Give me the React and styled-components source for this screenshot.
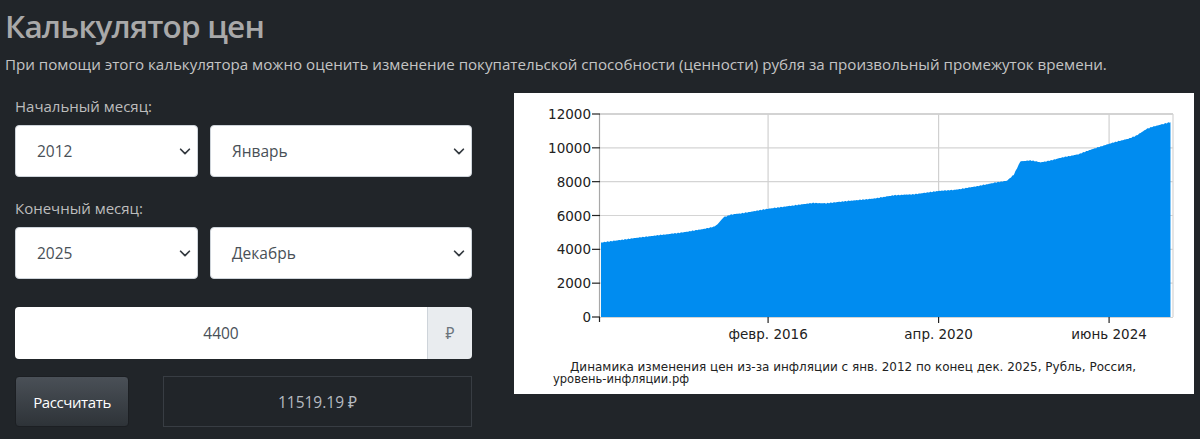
import React from 'react';
import styled, { createGlobalStyle } from 'styled-components';

const GlobalStyle = createGlobalStyle`
  html, body {
    margin: 0;
    padding: 0;
    background: #212529;
  }
  body {
    font-family: 'Open Sans', 'Noto Sans', sans-serif;
  }
`;

const Page = styled.div`
  width: 1200px;
  height: 439px;
  overflow: hidden;
  background: #212529;
`;

const Header = styled.div`
  padding: 6px 5px 0;
`;

const Title = styled.h1`
  margin: 0;
  font-size: 31.5px;
  font-weight: 600;
  letter-spacing: -0.8px;
  line-height: 40px;
  color: #a9a9a9;
`;

const Lead = styled.p`
  margin: 6px 0 0;
  font-size: 15.15px;
  line-height: 24px;
  color: #c4c4c4;
`;

const Main = styled.div`
  display: flex;
  margin-top: 17px;
`;

const Form = styled.div`
  width: 457px;
  padding: 1px 0 0 15px;
  display: flex;
  flex-direction: column;
`;

const Label = styled.div`
  font-size: 15px;
  line-height: 24px;
  color: #bdbdbd;
  margin: ${p => p.$first ? '0' : '19px'} 0 7px;
`;

const SelectRow = styled.div`
  display: flex;
  gap: 12px;
`;

const SelectBox = styled.div`
  width: ${p => p.$w}px;
  height: 52px;
  box-sizing: border-box;
  background: #fff;
  border: 1px solid #ced4da;
  border-radius: 4px;
  display: flex;
  align-items: center;
  justify-content: space-between;
  padding: 0 5px 0 21px;
  font-size: 15.5px;
  color: #495057;
`;

const Chevron = () => (
  <svg width="14" height="14" viewBox="0 0 16 16" fill="none">
    <path d="M3 6l5 5 5-5" stroke="#343a40" strokeWidth="2" strokeLinecap="round" strokeLinejoin="round" />
  </svg>
);

const InputGroup = styled.div`
  display: flex;
  margin-top: 28px;
  height: 52px;
  border-radius: 4px;
  overflow: hidden;
`;

const AmountInput = styled.div`
  flex: 1;
  background: #fff;
  display: flex;
  align-items: center;
  justify-content: center;
  font-size: 15.5px;
  color: #495057;
`;

const Addon = styled.div`
  width: 44px;
  background: #e9ecef;
  border-left: 1px solid #ced4da;
  display: flex;
  align-items: center;
  justify-content: center;
  font-size: 15.5px;
  color: #6c757d;
`;

const ActionRow = styled.div`
  display: flex;
  margin-top: 17px;
  gap: 34px;
`;

const CalcButton = styled.button`
  width: 114px;
  height: 51px;
  border: 1px solid #1c1f23;
  border-radius: 4px;
  background: linear-gradient(#4a5057, #2e3338);
  color: #fff;
  font-family: inherit;
  font-size: 15px;
  letter-spacing: -0.4px;
  padding: 0;
  cursor: pointer;
`;

const Result = styled.div`
  flex: 1;
  height: 51px;
  box-sizing: border-box;
  border: 1px solid #383d43;
  display: flex;
  align-items: center;
  justify-content: center;
  font-size: 15.5px;
  color: #b5bac0;
`;

const ChartCard = styled.div`
  margin-left: 42px;
  width: 680px;
  height: 301px;
  background: #fff;
`;

// monthly index (0 = Jan 2012) and price level
const knots = [
  [0, 4400], [12, 4720], [24, 5000], [30, 5200], [33, 5330], [34, 5450],
  [36, 5900], [38, 6050], [42, 6150], [49, 6400], [56, 6580], [62, 6740],
  [66, 6720], [72, 6850], [80, 7000], [86, 7200], [92, 7260], [99, 7450],
  [104, 7520], [110, 7720], [116, 7960], [119, 8050], [121, 8400], [122, 8800],
  [123, 9200], [126, 9260], [129, 9140], [132, 9260], [135, 9420], [140, 9620],
  [144, 9920], [150, 10300], [155, 10560], [157, 10720], [160, 11120],
  [162, 11260], [167, 11520],
];

const valueAt = m => {
  for (let i = 1; i < knots.length; i++) {
    const [m1, v1] = knots[i];
    const [m0, v0] = knots[i - 1];
    if (m <= m1) return v0 + (v1 - v0) * (m - m0) / (m1 - m0);
  }
  return knots[knots.length - 1][1];
};

const X0 = 87;
const PX_PER_MONTH = 3.41;
const Y0 = 224;
const PX_PER_UNIT = 203 / 12000;
const mx = m => X0 + m * PX_PER_MONTH;
const vy = v => Y0 - v * PX_PER_UNIT;

const areaPath = () => {
  let d = `M${mx(0)} ${Y0}`;
  for (let m = 0; m <= 167; m += 0.25) {
    const jitter = Math.sin(m * 7.3) * 14 + Math.sin(m * 19.1) * 10;
    d += ` L${mx(m).toFixed(2)} ${vy(valueAt(m) + jitter).toFixed(2)}`;
  }
  d += ` L${mx(167)} ${Y0} Z`;
  return d;
};

const yTicks = [0, 2000, 4000, 6000, 8000, 10000, 12000];
const xTicks = [
  { m: 49, label: 'февр. 2016' },
  { m: 99, label: 'апр. 2020' },
  { m: 149, label: 'июнь 2024' },
];

const PriceChart = () => (
  <svg width="680" height="301" viewBox="0 0 680 301" fontFamily="'DejaVu Sans', sans-serif">
    {yTicks.slice(1).map(v => (
      <line key={v} x1="86" x2="659" y1={vy(v)} y2={vy(v)} stroke={v === 12000 ? '#a8a8a8' : '#d4d4d4'} strokeWidth="1.2" />
    ))}
    {xTicks.map(t => (
      <line key={t.m} x1={mx(t.m)} x2={mx(t.m)} y1="21" y2={Y0} stroke="#d0d0d0" strokeWidth="1.2" />
    ))}
    <line x1="659" x2="659" y1="21" y2={Y0} stroke="#d4d4d4" strokeWidth="1.2" />
    <line x1="86" x2="659" y1={Y0 + 0.5} y2={Y0 + 0.5} stroke="#d4d4d4" strokeWidth="1" />
    <path d={areaPath()} fill="#008cf0" />
    <line x1="85.5" x2="85.5" y1="21" y2={Y0 + 1} stroke="#a8a8a8" strokeWidth="1.2" />
    {yTicks.map(v => (
      <g key={v}>
        <line x1="78" x2="86" y1={vy(v)} y2={vy(v)} stroke="#222" strokeWidth="1.2" />
        <text x="77" y={vy(v) + 5} textAnchor="end" fontSize="13.5" fill="#222">{v}</text>
      </g>
    ))}
    <line x1="85.5" x2="85.5" y1={Y0} y2={Y0 + 5} stroke="#222" strokeWidth="1.2" />
    {xTicks.map(t => (
      <g key={t.m}>
        <line x1={mx(t.m)} x2={mx(t.m)} y1={Y0} y2={Y0 + 6} stroke="#222" strokeWidth="1.2" />
        <text x={mx(t.m)} y="246" textAnchor="middle" fontSize="13.5" fill="#222">{t.label}</text>
      </g>
    ))}
    <text x="56" y="278" fontSize="11.5" fill="#222" textLength="566" lengthAdjust="spacingAndGlyphs">
      Динамика изменения цен из-за инфляции с янв. 2012 по конец дек. 2025, Рубль, Россия,
    </text>
    <text x="39" y="290" fontSize="11.5" fill="#222">уровень-инфляции.рф</text>
  </svg>
);

export default function App() {
  return (
    <Page>
      <GlobalStyle />
      <Header>
        <Title>Калькулятор цен</Title>
        <Lead>При помощи этого калькулятора можно оценить изменение покупательской способности (ценности) рубля за произвольный промежуток времени.</Lead>
      </Header>
      <Main>
        <Form>
          <Label $first>Начальный месяц:</Label>
          <SelectRow>
            <SelectBox $w={183}><span>2012</span><Chevron /></SelectBox>
            <SelectBox $w={262}><span>Январь</span><Chevron /></SelectBox>
          </SelectRow>
          <Label>Конечный месяц:</Label>
          <SelectRow>
            <SelectBox $w={183}><span>2025</span><Chevron /></SelectBox>
            <SelectBox $w={262}><span>Декабрь</span><Chevron /></SelectBox>
          </SelectRow>
          <InputGroup>
            <AmountInput>4400</AmountInput>
            <Addon>₽</Addon>
          </InputGroup>
          <ActionRow>
            <CalcButton>Рассчитать</CalcButton>
            <Result>11519.19 ₽</Result>
          </ActionRow>
        </Form>
        <ChartCard>
          <PriceChart />
        </ChartCard>
      </Main>
    </Page>
  );
}
